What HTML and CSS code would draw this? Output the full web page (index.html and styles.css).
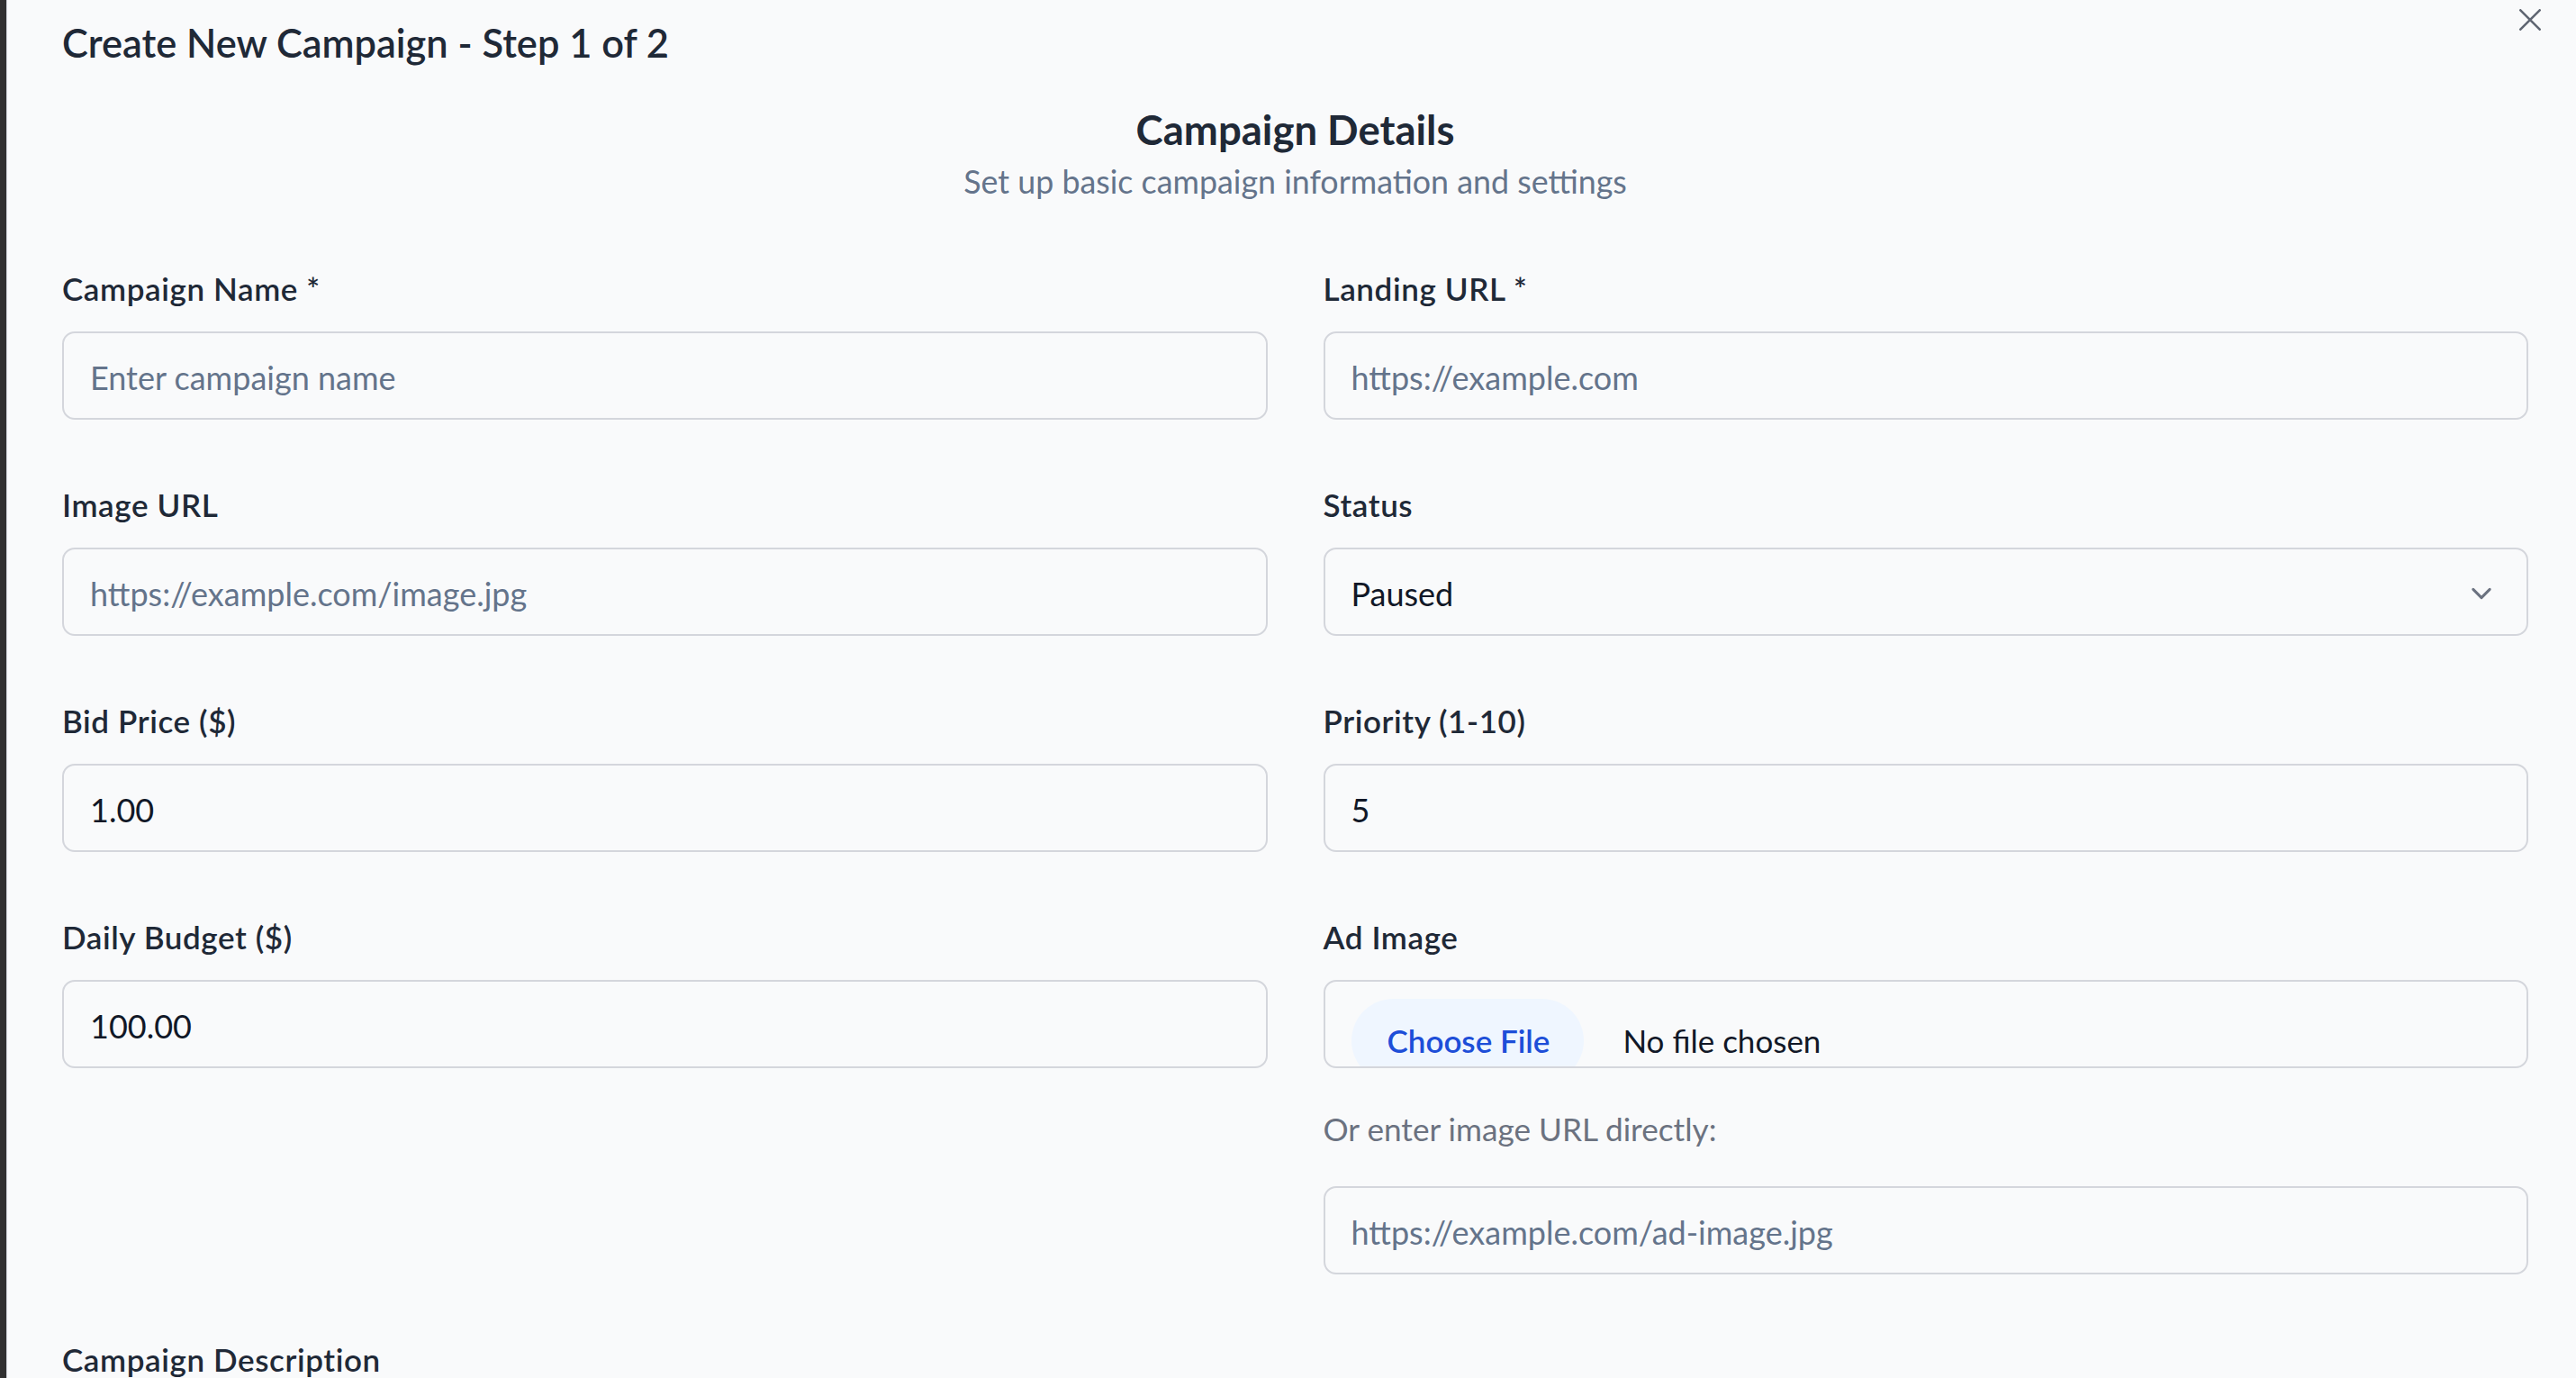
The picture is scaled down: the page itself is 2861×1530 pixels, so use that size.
FILE: index.html
```html
<!DOCTYPE html>
<html lang="en">
<head>
<meta charset="utf-8">
<title>Create New Campaign</title>
<link rel="stylesheet" href="styles.css">
</head>
<body>
<div class="backdrop">
  <div class="modal">
    <button class="close" type="button" aria-label="Close">
      <svg width="24" height="24" viewBox="0 0 24 24" fill="none" stroke="currentColor" stroke-width="2.6" stroke-linecap="round"><path d="M1.3 1.3 L22.7 22.7 M22.7 1.3 L1.3 22.7"/></svg>
    </button>
    <h2 class="modal-title">Create New Campaign - Step 1 of 2</h2>
    <div class="section-head">
      <h3 class="section-title">Campaign Details</h3>
      <p class="section-sub">Set up basic campaign information and settings</p>
    </div>
    <form class="form-grid">
      <div class="field">
        <label class="label">Campaign Name *</label>
        <input class="control" type="text" placeholder="Enter campaign name">
      </div>
      <div class="field">
        <label class="label">Landing URL *</label>
        <input class="control" type="text" placeholder="https://example.com">
      </div>
      <div class="field">
        <label class="label">Image URL</label>
        <input class="control" type="text" placeholder="https://example.com/image.jpg">
      </div>
      <div class="field">
        <label class="label">Status</label>
        <div class="control select">
          <span>Paused</span>
          <svg class="chevron" width="46" height="46" viewBox="0 0 20 20" fill="none" stroke="#6b7280" stroke-width="1.3" stroke-linecap="round" stroke-linejoin="round"><path d="M6 8l4 4 4-4"/></svg>
        </div>
      </div>
      <div class="field">
        <label class="label">Bid Price ($)</label>
        <input class="control" type="text" value="1.00">
      </div>
      <div class="field">
        <label class="label">Priority (1-10)</label>
        <input class="control" type="text" value="5">
      </div>
      <div class="field">
        <label class="label">Daily Budget ($)</label>
        <input class="control" type="text" value="100.00">
      </div>
      <div class="field">
        <label class="label">Ad Image</label>
        <div class="control file">
          <span class="file-btn">Choose File</span>
          <span class="file-name">No file chosen</span>
        </div>
        <p class="hint">Or enter image URL directly:</p>
        <input class="control" type="text" placeholder="https://example.com/ad-image.jpg">
      </div>
      <div class="field full">
        <label class="label">Campaign Description</label>
        <textarea class="control area" placeholder="Describe your campaign"></textarea>
      </div>
    </form>
  </div>
</div>
</body>
</html>
```

FILE: styles.css
```css
* { box-sizing: border-box; }

html, body {
  margin: 0;
  height: 100%;
}

body {
  background: #303030;
  font-family: Lato, "Noto Sans", sans-serif;
  color: #1f2937;
  overflow: hidden;
}

.backdrop {
  height: 1530px;
  display: flex;
  padding-left: 7px;
}

.modal {
  position: relative;
  flex: 1;
  background: #f9fafb;
  border-left: 1px solid #d1d5db;
  padding: 21px 53px 0 61px;
}

.close {
  position: absolute;
  top: 10px;
  right: 39px;
  width: 24px;
  height: 24px;
  padding: 0;
  border: 0;
  background: none;
  color: #5f6672;
  display: flex;
}

.modal-title {
  margin: 0;
  font-size: 43.4px;
  line-height: 52px;
  font-weight: 600;
  color: #1f2937;
}

.section-head {
  margin-top: 45px;
  text-align: center;
}

.section-title {
  margin: 0;
  font-size: 45.5px;
  line-height: 52px;
  font-weight: 700;
  color: #1f2937;
}

.section-sub {
  margin: 10px 0 0;
  font-size: 35.8px;
  line-height: 44px;
  color: #64748b;
}

.form-grid {
  margin-top: 74px;
  display: grid;
  grid-template-columns: 1fr 1fr;
  column-gap: 62px;
  row-gap: 72px;
  align-items: start;
}

.field {
  display: flex;
  flex-direction: column;
}

.field.full {
  grid-column: 1 / -1;
}

.label {
  font-size: 35px;
  letter-spacing: 0.6px;
  line-height: 44px;
  font-weight: 600;
  color: #1f2937;
  margin-bottom: 26px;
}

.control {
  height: 98px;
  width: 100%;
  border: 2px solid #d4d6dc;
  border-radius: 14px;
  background: #f9fafb;
  padding: 3px 29px 0;
  font-family: inherit;
  font-size: 36px;
  color: #111827;
  outline: none;
}

.control::placeholder {
  color: #64748b;
  opacity: 1;
}

.select {
  display: flex;
  align-items: center;
  justify-content: space-between;
  padding-right: 27px;
}

.chevron {
  flex: none;
}

.file {
  display: flex;
  align-items: baseline;
  overflow: hidden;
  padding-top: 19px;
  font-size: 35px;
}

.file-btn {
  flex: none;
  height: 93px;
  padding: 24px 38px 0 40px;
  border-radius: 999px;
  background: #eff6ff;
  color: #1d4ed8;
  font-weight: 600;
  line-height: 44px;
  margin-right: 43px;
}

.file-name {
  line-height: 44px;
  color: #111827;
}

.hint {
  margin: 45px 0 42px;
  font-size: 35.2px;
  line-height: 44px;
  color: #6b7280;
}

.area {
  height: 200px;
  padding-top: 24px;
  resize: none;
}
```
